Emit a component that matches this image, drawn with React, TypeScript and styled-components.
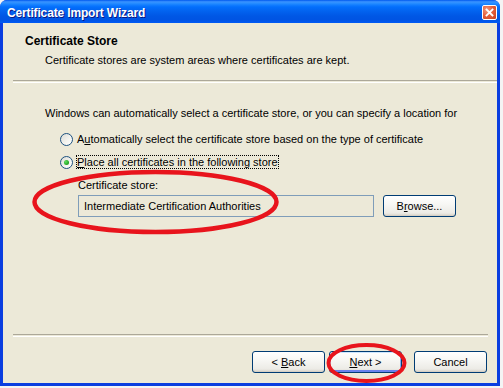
import React from "react";
import styled, { createGlobalStyle } from "styled-components";

const Global = createGlobalStyle`
  html, body { margin: 0; padding: 0; background: #f4f4f4; }
  body { font-family: Tahoma, "Liberation Sans", Arial, sans-serif; font-size: 11px; color: #000; }
  #root { width: 503px; height: 388px; position: relative; overflow: hidden; }
`;

const Window = styled.div`
  width: 500px;
  height: 386px;
  display: flex;
  flex-direction: column;
  background: #0a3ee0;
  border-radius: 7px 7px 0 0;
  overflow: hidden;
  position: relative;
`;

const TitleBar = styled.div`
  height: 23px;
  flex: none;
  box-sizing: border-box;
  display: flex;
  align-items: center;
  justify-content: space-between;
  padding: 2px 3px 0 7px;
  background: linear-gradient(
    to bottom,
    #0058ee 0%,
    #3a93ff 8%,
    #288eff 14%,
    #127dff 22%,
    #036ffc 30%,
    #0262ee 50%,
    #0057e5 70%,
    #0054e3 85%,
    #0055eb 92%,
    #005bf5 100%
  );
`;

const Title = styled.span`
  font-family: "Liberation Sans", Arial, sans-serif;
  font-weight: bold;
  font-size: 12px;
  letter-spacing: -0.15px;
  color: #fff;
  text-shadow: 1px 1px 0 #0a1883;
`;

const CloseButton = styled.div`
  width: 15px;
  height: 15px;
  box-sizing: border-box;
  border: 1px solid #fff;
  border-radius: 2px;
  background: radial-gradient(circle at 30% 30%, #f29a7e 0%, #e5603c 45%, #c8401e 100%);
  display: flex;
  align-items: center;
  justify-content: center;
`;

const Frame = styled.div`
  flex: 1;
  display: flex;
  padding: 0 3px 3px 3px;
  min-height: 0;
  min-width: 0;
`;

const Client = styled.div`
  flex: 1;
  min-width: 0;
  background: #ece9d8;
  display: flex;
  flex-direction: column;
  position: relative;
`;

const Header = styled.div`
  height: 57px;
  box-sizing: border-box;
  padding: 11px 0 0 22px;
  display: flex;
  flex-direction: column;
  gap: 6px;
`;

const HeaderTitle = styled.div`
  font-weight: bold;
  font-size: 12px;
  font-family: "Liberation Sans", Arial, sans-serif;
`;

const HeaderSub = styled.div`
  padding-left: 20px;
`;

const Separator = styled.div<{ $inset: number }>`
  margin: 0 ${(p) => p.$inset}px 0 10px;
  height: 1px;
  border-top: 1px solid #aca899;
  border-bottom: 1px solid #fff;
  flex: none;
`;

const Body = styled.div`
  flex: 1;
  min-width: 0;
  padding: 24px 0 0 42px;
  display: flex;
  flex-direction: column;
  white-space: nowrap;
  overflow: hidden;
`;

const Intro = styled.div`
  margin-bottom: 13px;
`;

const Options = styled.div`
  padding-left: 15px;
  display: flex;
  flex-direction: column;
  gap: 9px;
`;

const OptionRow = styled.div`
  display: flex;
  align-items: center;
  gap: 3px;
  height: 14px;
`;

const Radio = styled.span<{ $checked?: boolean }>`
  width: 13px;
  height: 13px;
  box-sizing: border-box;
  border-radius: 50%;
  border: 1px solid #1c5180;
  background: linear-gradient(135deg, #dcdcd5 0%, #f4f4f0 60%, #ffffff 100%);
  display: flex;
  align-items: center;
  justify-content: center;
  flex: none;
  &::after {
    content: "";
    display: ${(p) => (p.$checked ? "block" : "none")};
    width: 5px;
    height: 5px;
    border-radius: 50%;
    background: radial-gradient(circle at 35% 35%, #5de05d 0%, #21a121 70%);
  }
`;

const OptionLabel = styled.span<{ $focused?: boolean }>`
  padding: 1px 1px;
  outline: ${(p) => (p.$focused ? "1px dotted #000" : "none")};
  outline-offset: -1px;
`;

const StoreBlock = styled.div`
  margin-top: 10px;
  padding-left: 33px;
  display: flex;
  flex-direction: column;
  gap: 4px;
`;

const StoreRow = styled.div`
  display: flex;
  align-items: center;
  gap: 9px;
`;

const StoreInput = styled.div`
  width: 296px;
  height: 22px;
  box-sizing: border-box;
  border: 1px solid #7f9db9;
  background: #ece9d8;
  padding: 0 0 0 5px;
  display: flex;
  align-items: center;
`;

const Button = styled.button<{ $default?: boolean }>`
  font: inherit;
  color: #000;
  width: 73px;
  height: 22px;
  flex: none;
  box-sizing: border-box;
  border: 1px solid #003c74;
  border-radius: 3px;
  padding: 0;
  background: linear-gradient(to bottom, #ffffff 0%, #f7f7f4 40%, #ecebe6 85%, #d6d0c5 100%);
  box-shadow: ${(p) =>
    p.$default
      ? "inset 0 1px 0 #cee7ff, inset 0 -2px 0 #6982ee, inset 1px 0 0 #bcd4f6, inset -1px 0 0 #89adf4"
      : "inset 0 -1px 0 #d6d0c5"};
  display: flex;
  align-items: center;
  justify-content: center;
  white-space: pre;
  u { text-decoration: underline; }
`;

const Footer = styled.div`
  height: 46px;
  flex: none;
  box-sizing: border-box;
  display: flex;
  justify-content: flex-end;
  align-items: flex-start;
  gap: 4px;
  padding: 14px 10px 0 0;
`;

const Gap = styled.span`
  width: 4px;
`;

const Annotation = styled.svg`
  position: absolute;
  left: 0;
  top: 0;
  pointer-events: none;
`;

export default function App() {
  return (
    <>
      <Global />
      <Window>
        <TitleBar>
          <Title>Certificate Import Wizard</Title>
          <CloseButton>
            <svg width="9" height="9" viewBox="0 0 9 9">
              <path d="M1.5 1.5 L7.5 7.5 M7.5 1.5 L1.5 7.5" stroke="#fff" strokeWidth="1.8" strokeLinecap="square" />
            </svg>
          </CloseButton>
        </TitleBar>
        <Frame>
          <Client>
            <Header>
              <HeaderTitle>Certificate Store</HeaderTitle>
              <HeaderSub>Certificate stores are system areas where certificates are kept.</HeaderSub>
            </Header>
            <Separator $inset={0} />
            <Body>
              <Intro>
                Windows can automatically select a certificate store, or you can specify a location for
              </Intro>
              <Options>
                <OptionRow>
                  <Radio />
                  <OptionLabel>
                    A<u>u</u>tomatically select the certificate store based on the type of certificate
                  </OptionLabel>
                </OptionRow>
                <OptionRow>
                  <Radio $checked />
                  <OptionLabel $focused>
                    <u>P</u>lace all certificates in the following store
                  </OptionLabel>
                </OptionRow>
              </Options>
              <StoreBlock>
                <span>Certificate store:</span>
                <StoreRow>
                  <StoreInput>Intermediate Certification Authorities</StoreInput>
                  <Button>
                    B<u>r</u>owse...
                  </Button>
                </StoreRow>
              </StoreBlock>
            </Body>
            <Separator $inset={9} />
            <Footer>
              <Button>
                {"< "}<u>B</u>ack
              </Button>
              <Button $default>
                <u>N</u>{"ext >"}
              </Button>
              <Gap />
              <Button>Cancel</Button>
            </Footer>
          </Client>
        </Frame>
        <Annotation width="500" height="386">
          <ellipse cx="155.5" cy="202" rx="121" ry="30" fill="none" stroke="#e8141c" strokeWidth="4.5" />
          <ellipse cx="366.5" cy="363" rx="38" ry="18" fill="none" stroke="#e8141c" strokeWidth="4" />
        </Annotation>
      </Window>
    </>
  );
}
